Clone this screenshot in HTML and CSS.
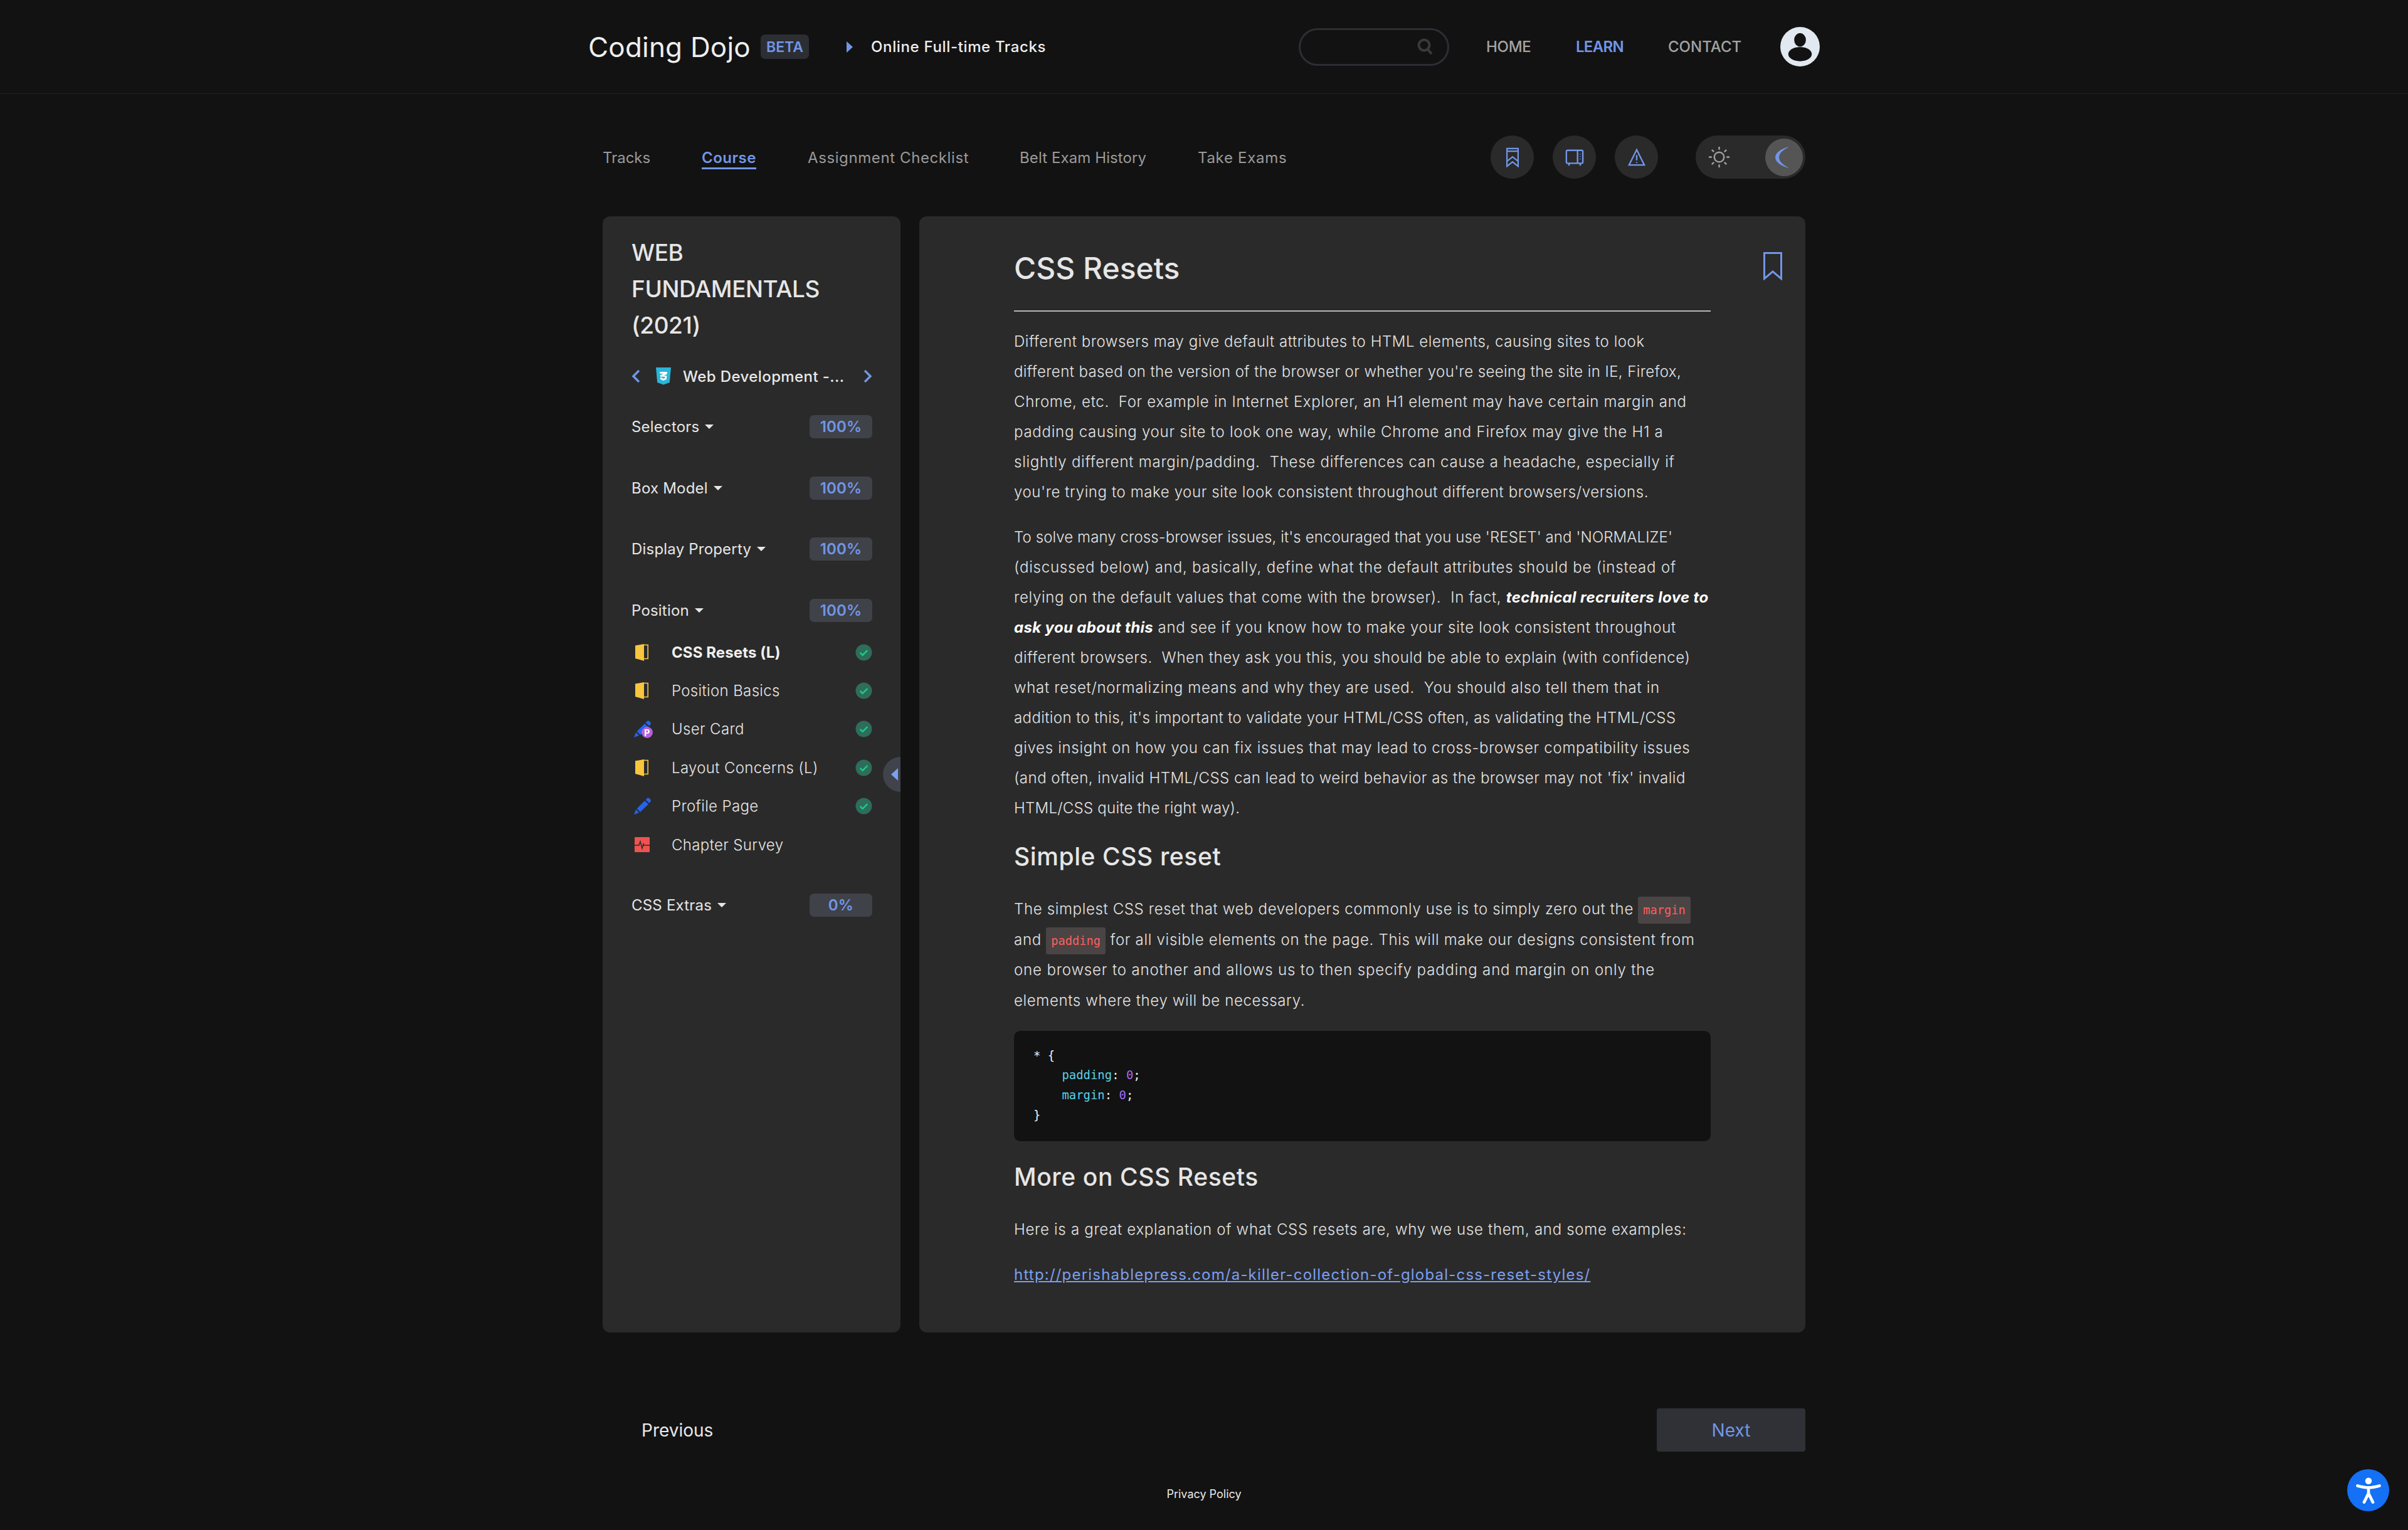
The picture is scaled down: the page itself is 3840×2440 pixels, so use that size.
FILE: index.html
```html
<!DOCTYPE html>
<html lang="en">
<head>
<meta charset="utf-8">
<title>CSS Resets</title>
<link rel="stylesheet" href="styles.css">
</head>
<body>
<header class="topbar">
  <div class="topbar-inner">
    <a class="brand">Coding Dojo</a>
    <span class="beta">BETA</span>
    <svg class="crumb-arrow" viewBox="0 0 10 18"><path d="M0 0l10 9-10 9z"/></svg>
    <span class="crumb">Online Full-time Tracks</span>
    <div class="spacer"></div>
    <div class="search">
      <svg viewBox="0 0 26 28" class="search-icon"><circle cx="11" cy="11" r="8.500"/><path d="M17 18l6 7"/></svg>
    </div>
    <nav class="mainnav">
      <a class="home">HOME</a>
      <a class="learn">LEARN</a>
      <a class="contact">CONTACT</a>
    </nav>
    <svg class="avatar" viewBox="0 0 64 64"><circle cx="32" cy="32" r="32" fill="#e2e8f0"/><ellipse cx="32" cy="21" rx="9.500" ry="11" fill="#121212"/><ellipse cx="32" cy="44" rx="19" ry="11.500" fill="#121212"/></svg>
  </div>
</header>

<div class="page">
  <div class="subnav">
    <a class="tab t1">Tracks</a>
    <a class="tab t2 active">Course</a>
    <a class="tab t3">Assignment Checklist</a>
    <a class="tab t4">Belt Exam History</a>
    <a class="tab t5">Take Exams</a>
    <div class="spacer"></div>
    <button class="round">
      <svg viewBox="0 0 24 36"><path d="M2 7V2h20v32l-10-8-10 8V7h20M2 25l10-8 10 8"/></svg>
    </button>
    <button class="round">
      <svg viewBox="0 0 32 32" class="wide"><rect x="2" y="4" width="28" height="22" rx="2"/><path d="M21 4v22M25.500 10v1M25.500 14v1M25.500 18v1M7 26l-1 4M25 26l1 4"/></svg>
    </button>
    <button class="round">
      <svg viewBox="0 0 32 32" class="wide"><path d="M16 3L29 29H3z"/><path d="M16 12v9M16 24v1.500"/></svg>
    </button>
    <div class="toggle">
      <svg class="sun" viewBox="0 0 36 36"><circle cx="18" cy="18" r="8"/><path d="M18 1v5M18 30v5M1 18h5M30 18h5M6 6l3.500 3.500M26.500 26.500L30 30M6 30l3.500-3.500M26.500 9.500L30 6"/></svg>
      <span class="thumb"><svg class="moon" viewBox="0 0 24 36"><path d="M23 1C10 4 1 11 1 18s9 14 22 17C14 30 7 25 7 18S14 6 23 1z"/></svg></span>
    </div>
  </div>

  <div class="panels">
    <aside class="sidebar">
      <h2 class="course-title">WEB<br>FUNDAMENTALS<br>(2021)</h2>
      <div class="course-row">
        <svg class="chev" viewBox="0 0 14 22"><path d="M12 2L3 11l9 9"/></svg>
        <svg class="css3" viewBox="0 0 24 28"><path fill="#2bb5d8" d="M0 0h24l-2.200 24L12 27.500 2.200 24z"/><path fill="#fff" d="M6 7h12l-.4 3.500-5 2.500h4.700l-.5 6L12 21l-4.800-2-.2-3h2.600l.1 1 2.300.8 2.300-.8.2-2.200H7l-.2-2.500 5.400-2.500H6.300z"/></svg>
        <span class="course-name">Web Development -...</span>
        <svg class="chev" viewBox="0 0 14 22"><path d="M2 2l9 9-9 9"/></svg>
      </div>

      <div class="section-head"><span>Selectors</span><i class="caret"></i><b class="pct">100%</b></div>
      <div class="section-head"><span>Box Model</span><i class="caret"></i><b class="pct">100%</b></div>
      <div class="section-head"><span>Display Property</span><i class="caret"></i><b class="pct">100%</b></div>
      <div class="section-head"><span>Position</span><i class="caret"></i><b class="pct">100%</b></div>
      <ul class="items">
        <li class="current">
          <svg class="door" viewBox="0 0 21 27"><path fill="#f7c63e" d="M0 2.500L14 0v27L0 23z"/><path fill="none" stroke="#f7c63e" stroke-width="1.600" d="M14 1.500h6.200V23.500H14"/></svg>
          <span>CSS Resets (L)</span><svg class="ok" viewBox="0 0 28 28"><circle cx="14" cy="14" r="13.500" fill="#2f6c5b"/><path d="M8 14.500l4 4 8-8" fill="none" stroke="#14d27e" stroke-width="2.600"/></svg>
        </li>
        <li>
          <svg class="door" viewBox="0 0 21 27"><path fill="#f7c63e" d="M0 2.500L14 0v27L0 23z"/><path fill="none" stroke="#f7c63e" stroke-width="1.600" d="M14 1.500h6.200V23.500H14"/></svg>
          <span>Position Basics</span><svg class="ok" viewBox="0 0 28 28"><circle cx="14" cy="14" r="13.500" fill="#2f6c5b"/><path d="M8 14.500l4 4 8-8" fill="none" stroke="#14d27e" stroke-width="2.600"/></svg>
        </li>
        <li>
          <svg class="pen" viewBox="0 0 30 28"><path fill="#2463eb" d="M0 27l3-8 5 5zM4.500 17.500L17 5l6 5.500L10 23zM18.500 3.500l2.500-2.500c1-1 2-1 3-.2l2.500 2.400c.8 1 .8 2-.2 3L24.500 9z"/><circle cx="21" cy="19" r="9" fill="#b560dc"/><text x="21" y="24.500" class="pbadge">P</text></svg>
          <span>User Card</span><svg class="ok" viewBox="0 0 28 28"><circle cx="14" cy="14" r="13.500" fill="#2f6c5b"/><path d="M8 14.500l4 4 8-8" fill="none" stroke="#14d27e" stroke-width="2.600"/></svg>
        </li>
        <li>
          <svg class="door" viewBox="0 0 21 27"><path fill="#f7c63e" d="M0 2.500L14 0v27L0 23z"/><path fill="none" stroke="#f7c63e" stroke-width="1.600" d="M14 1.500h6.200V23.500H14"/></svg>
          <span>Layout Concerns (L)</span><svg class="ok" viewBox="0 0 28 28"><circle cx="14" cy="14" r="13.500" fill="#2f6c5b"/><path d="M8 14.500l4 4 8-8" fill="none" stroke="#14d27e" stroke-width="2.600"/></svg>
        </li>
        <li>
          <svg class="pen" viewBox="0 0 30 28"><path fill="#2463eb" d="M0 27l3-8 5 5zM4.500 17.500L17 5l6 5.500L10 23zM18.500 3.500l2.500-2.500c1-1 2-1 3-.2l2.500 2.400c.8 1 .8 2-.2 3L24.500 9z"/></svg>
          <span>Profile Page</span><svg class="ok" viewBox="0 0 28 28"><circle cx="14" cy="14" r="13.500" fill="#2f6c5b"/><path d="M8 14.500l4 4 8-8" fill="none" stroke="#14d27e" stroke-width="2.600"/></svg>
        </li>
        <li>
          <svg class="survey" viewBox="0 0 24 24"><rect width="24" height="24" rx="1" fill="#ef5350"/><path d="M0 13h7l2-6 3 11 2-7 1 2h9" fill="none" stroke="#2a2a2a" stroke-width="1.500"/></svg>
          <span>Chapter Survey</span>
        </li>
      </ul>
      <div class="section-head extras"><span>CSS Extras</span><i class="caret"></i><b class="pct">0%</b></div>
      <div class="collapse"><i></i></div>
    </aside>

    <main class="article">
      <svg class="bookmark" viewBox="0 0 30 45"><path d="M1.500 1.500h27v41L15 31 1.500 42.500z"/></svg>
      <h1>CSS Resets</h1>
      <hr>
      <p>
        <span class="ln ls55">Different browsers may give default attributes to HTML elements, causing sites to look</span>
        <span class="ln ls40">different based on the version of the browser or whether you're seeing the site in IE, Firefox,</span>
        <span class="ln ls70">Chrome, etc.&nbsp; For example in Internet Explorer, an H1 element may have certain margin and</span>
        <span class="ln ls75">padding causing your site to look one way, while Chrome and Firefox may give the H1 a</span>
        <span class="ln ls75">slightly different margin/padding.&nbsp; These differences can cause a headache, especially if</span>
        <span class="ln ls60">you're trying to make your site look consistent throughout different browsers/versions.</span>
      </p>
      <p>
        <span class="ln ls10">To solve many cross-browser issues, it's encouraged that you use 'RESET' and 'NORMALIZE'</span>
        <span class="ln ls80">(discussed below) and, basically, define what the default attributes should be (instead of</span>
        <span class="ln ls70">relying on the default values that come with the browser).&nbsp; In fact, <strong>technical recruiters love to</strong></span>
        <span class="ln ls70"><strong>ask you about this</strong> and see if you know how to make your site look consistent throughout</span>
        <span class="ln ls60">different browsers.&nbsp; When they ask you this, you should be able to explain (with confidence)</span>
        <span class="ln ls70">what reset/normalizing means and why they are used.&nbsp; You should also tell them that in</span>
        <span class="ln ls40">addition to this, it's important to validate your HTML/CSS often, as validating the HTML/CSS</span>
        <span class="ln ls70">gives insight on how you can fix issues that may lead to cross-browser compatibility issues</span>
        <span class="ln ls50">(and often, invalid HTML/CSS can lead to weird behavior as the browser may not 'fix' invalid</span>
        <span class="ln ls25">HTML/CSS quite the right way).</span>
      </p>
      <h2>Simple CSS reset</h2>
      <p class="after-h2 code-para">
        <span class="ln ls65">The simplest CSS reset that web developers commonly use is to simply zero out the <code>margin</code></span>
        <span class="ln ls70">and <code>padding</code> for all visible elements on the page. This will make our designs consistent from</span>
        <span class="ln ls85">one browser to another and allows us to then specify padding and margin on only the</span>
        <span class="ln ls65">elements where they will be necessary.</span>
      </p>
      <pre class="codeblock"><span class="w">* {</span>
    <span class="c">padding</span><span class="w">:</span> <span class="n">0</span><span class="w">;</span>
    <span class="c">margin</span><span class="w">:</span> <span class="n">0</span><span class="w">;</span>
<span class="w">}</span></pre>
      <h2 class="h2b">More on CSS Resets</h2>
      <p class="after-h2 ls70">Here is a great explanation of what CSS resets are, why we use them, and some examples:</p>
      <p><a class="link">http://perishablepress.com/a-killer-collection-of-global-css-reset-styles/</a></p>
    </main>
  </div>

  <div class="pager">
    <a class="prev">Previous</a>
    <a class="next">Next</a>
  </div>
  <div class="privacy">Privacy Policy</div>
</div>

<div class="a11y">
  <svg viewBox="0 0 36 36"><circle cx="18" cy="5" r="4.500" fill="#fff" stroke="none"/><path d="M3 11.500c5 1.500 10 2.500 15 2.500s10-1 15-2.500M18 14v9M18 22l-6 12M18 22l6 12"/></svg>
</div>
</body>
</html>
```
FILE: styles.css
```css
* { box-sizing: border-box; }
html, body { margin: 0; padding: 0; }
body {
  background: #121212;
  color: #e4e4e4;
  font-family: Inter, "Open Sans", sans-serif;
  position: relative;
  min-height: 100vh;
}
.spacer { flex: 1; }

/* top bar */
.topbar { height: 150px; border-bottom: 1px solid #222; }
.topbar-inner { width: 1964px; margin: 0 auto; height: 149px; display: flex; align-items: center; }
.brand { font-size: 44px; font-weight: 400; color: #eee; width: 275px; white-space: nowrap; letter-spacing: .2px; }
.beta {
  width: 77px; height: 39px; background: #2c2e33; border-radius: 7px; color: #7296e6;
  font-size: 23px; font-weight: 600; display: flex; align-items: center; justify-content: center;
}
.crumb-arrow { width: 10px; height: 18px; margin-left: 60px; fill: #7296e6; }
.crumb { margin-left: 29px; font-size: 24px; font-weight: 500; color: #eee; white-space: nowrap; letter-spacing: .65px; }
.search { width: 240px; height: 60px; border: 3px solid #2c2e33; border-radius: 30px; display: flex; align-items: center; justify-content: flex-end; padding-right: 22px; }
.search-icon { width: 26px; height: 28px; fill: none; stroke: #3a3a3a; stroke-width: 4; }
.mainnav { display: flex; font-size: 24px; font-weight: 500; color: #a3a3a3; margin-left: 59px; }
.mainnav a { white-space: nowrap; }
.home { width: 143px; letter-spacing: -.3px; }
.learn { width: 147px; color: #7296e6; font-weight: 600; letter-spacing: -.7px; }
.contact { width: 179px; }
.avatar { width: 63px; height: 63px; }

/* page */
.page { width: 1918px; margin: 0 auto; }
.subnav { display: flex; align-items: center; height: 69px; margin-top: 66px; }
.tab { font-size: 24px; color: #9a9a9a; white-space: nowrap; border-bottom: 3px solid transparent; padding: 5px 0 1px; letter-spacing: .5px; }
.t1 { width: 77px; margin-right: 81px; letter-spacing: 0; }
.t2 { width: 87px; margin-right: 82px; }
.t3 { width: 257px; margin-right: 81px; letter-spacing: .6px; }
.t4 { width: 204px; margin-right: 80px; letter-spacing: .1px; }
.t5 { width: 140px; letter-spacing: .7px; }
.tab.active { color: #7296e6; font-weight: 600; border-bottom-color: #7296e6; }
.round {
  width: 69px; height: 69px; border-radius: 50%; background: #2a2a2a; border: 0; margin: 0 30px 0 0; padding: 0;
  display: flex; align-items: center; justify-content: center;
}
.round svg { width: 22px; height: 32px; fill: none; stroke: #7296e6; stroke-width: 2.500; }
.round svg.wide { width: 30px; height: 30px; }
.toggle { width: 175px; height: 69px; border-radius: 35px; background: #2a2a2a; margin-left: 30px; display: flex; align-items: center; justify-content: space-between; padding: 0 4px 0 20px; }
.sun { width: 35px; height: 35px; fill: none; stroke: #a0a0a0; stroke-width: 2.500; }
.thumb { width: 60px; height: 60px; border-radius: 50%; background: #555; display: flex; align-items: center; justify-content: center; padding-right: 6px; }
.moon { width: 24px; height: 36px; fill: #7296e6; }

.panels { display: flex; gap: 30px; margin-top: 60px; height: 1780px; }
.sidebar { width: 475px; background: #2a2a2a; border-radius: 12px; padding: 29px 45px 0 46px; position: relative; overflow: hidden; }
.course-title { margin: 0; font-size: 37px; line-height: 58px; font-weight: 500; color: #e6e6e6; white-space: nowrap; letter-spacing: -.4px; }
.course-row { height: 50px; margin-top: 27px; display: flex; align-items: center; font-size: 24px; color: #e8e8e8; font-weight: 500; }
.chev { width: 14px; height: 22px; fill: none; stroke: #7296e6; stroke-width: 3.500; flex: none; }
.css3 { width: 24px; height: 28px; margin-left: 25px; margin-right: 19px; flex: none; }
.course-name { width: 288px; white-space: nowrap; letter-spacing: .4px; }

.section-head { height: 37px; margin-top: 60.500px; display: flex; align-items: center; font-size: 24px; color: #e6e6e6; white-space: nowrap; letter-spacing: .2px; }
.course-row + .section-head { margin-top: 37px; }
.section-head.extras { margin-top: 47px; }
.caret { width: 0; height: 0; border-left: 7px solid transparent; border-right: 7px solid transparent; border-top: 7px solid #e6e6e6; margin-left: 9px; }
.pct {
  margin-left: auto; width: 100px; height: 37px; background: #3f4249; border-radius: 7px; color: #7296e6;
  font-size: 24px; font-weight: 600; display: flex; align-items: center; justify-content: center;
}
.items { list-style: none; margin: 18px 0 0; padding: 0; }
.items li { height: 61.400px; display: grid; grid-template-columns: 64px 1fr 27px; align-items: center; font-size: 24px; font-weight: 350; color: #e6e6e6; white-space: nowrap; letter-spacing: .35px; }
.items li.current { font-weight: 700; color: #f0f0f0; letter-spacing: .1px; }
.door { width: 21px; height: 27px; margin-left: 6px; }
.pen { width: 30px; height: 28px; margin-left: 4px; }
.survey { width: 24px; height: 24px; margin-left: 5px; }
.ok { width: 27px; height: 27px; }
.pbadge { font-size: 14px; font-weight: 700; fill: #fff; text-anchor: middle; font-family: Inter, sans-serif; }
.collapse { position: absolute; right: -28px; top: 862px; width: 56px; height: 56px; border-radius: 50%; background: #40434b; }
.collapse i { position: absolute; left: 13px; top: 18px; width: 0; height: 0; border-top: 10px solid transparent; border-bottom: 10px solid transparent; border-right: 11px solid #7c9ff0; }

/* article */
.article { width: 1413px; background: #2a2a2a; border-radius: 12px; padding: 53px 151px 0; position: relative; }
.bookmark { position: absolute; right: 37px; top: 57px; width: 30px; height: 45px; fill: none; stroke: #7296e6; stroke-width: 3; }
h1 { margin: 0; font-size: 48px; line-height: 60px; font-weight: 500; color: #e6e6e6; }
hr { border: 0; height: 2px; background: #b5b5b5; margin: 37px 0 0; }
.article p { margin: 24px 0 0; font-size: 24px; line-height: 48px; font-weight: 350; color: #e4e4e4; white-space: nowrap; }
.ln { display: block; }
.ls10 { letter-spacing: .1px; }
.ls25 { letter-spacing: .25px; }
.ls40 { letter-spacing: .4px; }
.ls50 { letter-spacing: .5px; }
.ls55 { letter-spacing: .55px; }
.ls60 { letter-spacing: .6px; }
.ls65 { letter-spacing: .65px; }
.ls70 { letter-spacing: .7px; }
.ls75 { letter-spacing: .75px; }
.ls80 { letter-spacing: .8px; }
.ls85 { letter-spacing: .85px; }
.article strong { font-weight: 700; font-style: italic; color: #fff; letter-spacing: .35px; }
.article h2 { margin: 28px 0 0; font-size: 39px; line-height: 50px; font-weight: 500; color: #e6e6e6; letter-spacing: .6px; }
.article h2.h2b { margin-top: 32px; }
.article p.after-h2 { margin-top: 35px; }
.article p.code-para { line-height: 48.700px; }
code { font-family: "DejaVu Sans Mono", monospace; font-size: 18.700px; line-height: 1; letter-spacing: 0; color: #ff5f5f; background: #4a4444; border-radius: 3px; padding: 11px 8px; }
.codeblock { margin: 23px 0 0; height: 176px; background: #121212; border-radius: 10px; padding: 24px 0 0 31px; font-family: "DejaVu Sans Mono", monospace; font-size: 18.900px; line-height: 31.600px; }
.w { color: #f2f2f2; }
.c { color: #5bd0e6; }
.n { color: #a06cf5; }
.link { color: #7c9ff0; text-decoration: underline; font-weight: 400; letter-spacing: 1.200px; }

.pager { display: flex; align-items: center; justify-content: space-between; height: 69px; margin-top: 121px; }
.prev { margin-left: 62px; font-size: 28px; color: #e8e8e8; }
.next { width: 237px; height: 69px; background: #2f3136; border-radius: 4px; color: #7296e6; font-size: 28px; display: flex; align-items: center; justify-content: center; }
.privacy { text-align: center; font-size: 18px; color: #e8e8e8; margin-top: 57px; line-height: 22px; }

.a11y { position: fixed; right: 30px; bottom: 30px; width: 67px; height: 67px; border-radius: 50%; background: #1470f5; display: flex; align-items: center; justify-content: center; }
.a11y svg { width: 42px; height: 42px; fill: none; stroke: #fff; stroke-width: 4; stroke-linecap: round; }
```
